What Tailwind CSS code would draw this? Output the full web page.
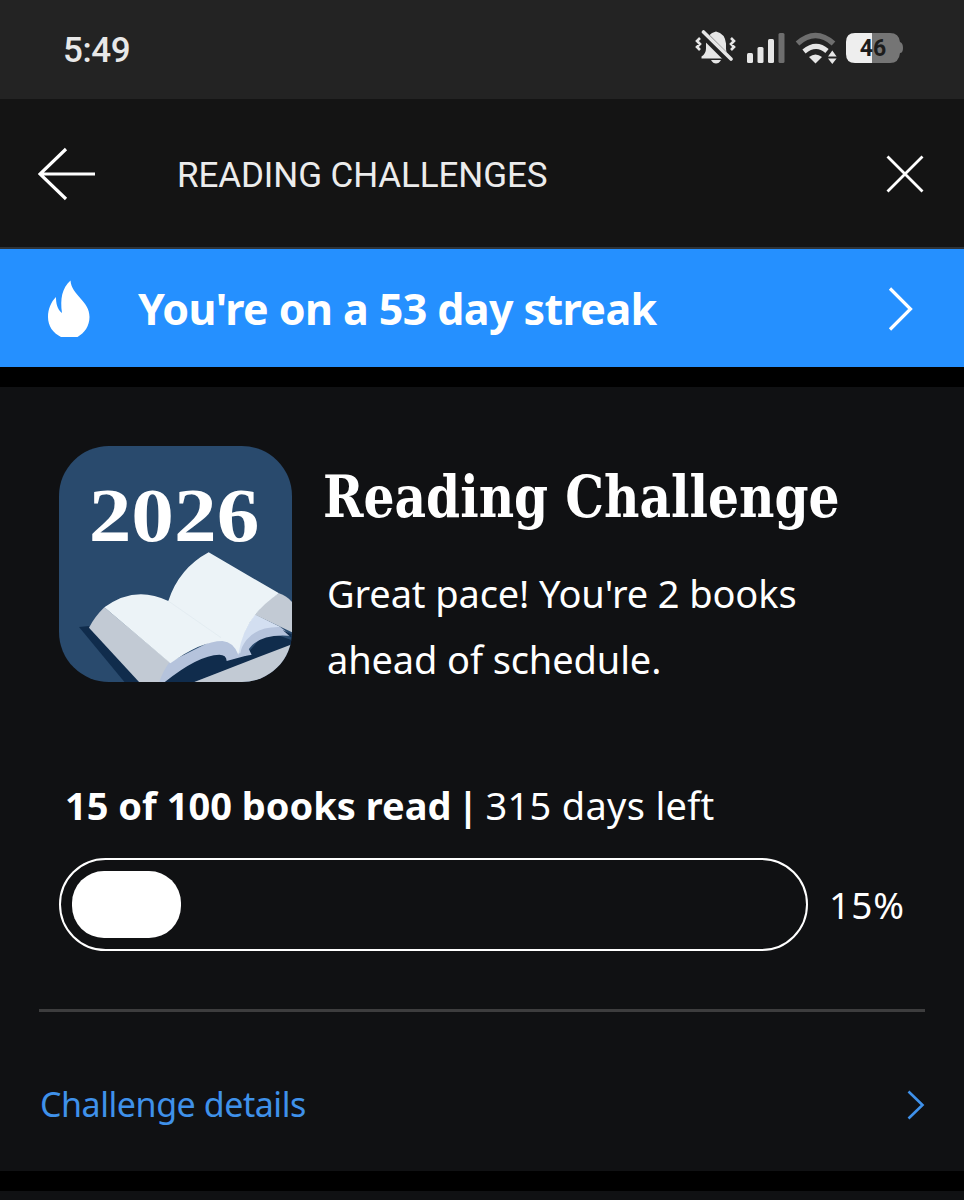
<!DOCTYPE html>
<html lang="en">
<head>
    <meta charset="UTF-8">
    <meta name="viewport" content="width=device-width, initial-scale=1.0">
    <title>Reading Challenges</title>
    <script src="https://cdn.jsdelivr.net/npm/@tailwindcss/browser@4"></script>
</head>
<body class="bg-black text-white font-['Noto_Sans',sans-serif] w-[964px] h-[1200px] overflow-hidden">
    <!-- Status bar -->
    <div class="flex items-center justify-between h-[99px] bg-[#232323] pl-[63px] pr-[60px] font-[Roboto,sans-serif]">
        <span class="mt-[2px] text-[35px] leading-none font-medium tracking-[-0.4px] text-[#e8e8e8]">5:49</span>
        <svg class="w-[210px] h-[40px]" viewBox="694 30 210 40" fill="none">
            <!-- muted bell -->
            <g fill="#e6e6e6">
                <path d="M701.500 58.500v-2q4.500-3 4.500-8v-5q1-10 10-12 9 2 10 12v5q0 5 4 8v2z"/>
                <path d="M711 60h10q-2 3.500-5 3.500t-5-3.500z"/>
            </g>
            <path d="M702 33l30 30" stroke="#232323" stroke-width="8"/>
            <path d="M703.500 32l27.500 27" stroke="#e6e6e6" stroke-width="3.600" stroke-linecap="round"/>
            <path d="M700 38l-3 3 3 3-3 3 3 3M731 38l3 3-3 3 3 3-3 3" stroke="#e6e6e6" stroke-width="2.600"/>
            <!-- signal -->
            <g fill="#e6e6e6">
                <rect x="747" y="53" width="6" height="10" rx="1.500"/>
                <rect x="757.500" y="47" width="6" height="16" rx="1.500"/>
                <rect x="768" y="39" width="6" height="24" rx="1.500"/>
                <rect x="778.500" y="33" width="6" height="30" rx="1.500" fill="#6e6e6e"/>
            </g>
            <!-- wifi -->
            <path d="M797.500 43.500q18-16 36 0" stroke="#6e6e6e" stroke-width="5.500"/>
            <path d="M804 51.500q12-10 23-.5" stroke="#e6e6e6" stroke-width="5"/>
            <path d="M809 57q6.500-5 13 0l-6.500 6.500z" fill="#e6e6e6"/>
            <path d="M828 56.500l4.300-6 4.300 6zM828 58.500h8.600l-4.300 5.500z" fill="#e6e6e6"/>
            <!-- battery -->
            <path d="M872 33h18q9 0 10 9 3 1 3 6t-3 5q-1 10-10 10h-18z" fill="#757575"/>
            <path d="M872 33h-17q-9 0-9 9v12q0 9 9 9h17z" fill="#eeeeee"/>
            <text x="873" y="56" text-anchor="middle" font-family="Roboto" font-weight="700" font-size="23" fill="#1c1c1c">46</text>
        </svg>
    </div>

    <!-- App header -->
    <header class="flex items-center h-[150px] bg-[#141414] border-b-2 border-[#2e3338] pt-[2px] pl-[38px] pr-[40px]">
        <svg class="w-[58px] h-[54px]" viewBox="0 0 58 54" fill="none" stroke="#fff" stroke-width="3.200">
            <path d="M28 2L2 27l26 25M2 27h55"/>
        </svg>
        <h1 class="mt-[2px] ml-[81px] text-[35px] leading-none tracking-[-0.1px] font-[Roboto,sans-serif] text-[#ececec]">READING CHALLENGES</h1>
        <svg class="ml-auto w-[38px] h-[38px]" viewBox="0 0 38 38" fill="none" stroke="#fff" stroke-width="2.800">
            <path d="M1.500 1.500l35 35M36.500 1.500l-35 35"/>
        </svg>
    </header>

    <!-- Streak banner -->
    <a class="flex items-center h-[118px] bg-[#2590ff] pl-[48px] pr-[51px]">
        <svg class="mt-[2px] w-[42px] h-[58px]" viewBox="0 0 42 58" fill="#fff">
            <path d="M22.500.5c1 15 19 20 19 36.500 0 9-5 16-12 20H13C5 53 0 46 0 37c0-8 3-15 8-20 0 6 1 12 6 16C12 19 14 8 22.500.5z"/>
        </svg>
        <span class="ml-[48px] text-[43px] leading-none font-bold tracking-[-0.6px]">You're on a 53 day streak</span>
        <svg class="ml-auto mt-[2px] w-[25px] h-[44px]" viewBox="0 0 25 44" fill="none" stroke="#fff" stroke-width="3.200">
            <path d="M2 1.500l20.500 20.500L2 42.500"/>
        </svg>
    </a>

    <!-- Challenge card -->
    <main class="mt-5 h-[784px] bg-[#101113] px-[39px] pt-[59px]">
        <div class="flex pl-[20px]">
            <svg class="w-[233px] h-[236px] rounded-[50px]" viewBox="27 28 699 708">
                <rect x="27" y="28" width="700" height="709" fill="#294a6d"/>
                <text x="116" y="314" textLength="512" lengthAdjust="spacingAndGlyphs" font-family="Liberation Serif" font-weight="700" font-size="229" fill="#fff">2026</text>
                <!-- cover -->
                <path d="M87 571l30-3 160 170h-52z" fill="#102c4c"/>
                <path d="M340 738l60-85 100-10 90 10 60-70 77 28v14L428 738z" fill="#102c4c"/>
                <path d="M428 738L727 622v116z" fill="#c2cad4"/>
                <!-- page edges -->
                <path d="M117 573q18-34 46-61l200 168-34 58h-60z" fill="#c2cad4"/>
                <path d="M327 738q12-36 32-62l140-70 76-10 30 58-20 4-55 15q-1-19-22-19-65 2-166 84z" fill="#b5c3dc"/>
                <path d="M565 655q0-50 50-120l75 35 36 28q-96-9-130 40l-10 20z" fill="#b5c3dc"/>
                <path d="M565 650q5-58 50-117l75 38q-66-2-100 38-16 20-19 41z" fill="#d3dff1"/>
                <path d="M687 470q-40 20-72 64l112 53v-90q-16-19-40-27z" fill="#c2cad4"/>
                <path d="M698 580l29 14v12z" fill="#102c4c"/>
                <!-- pages -->
                <path d="M163 512q92-68 192-19 32-98 121-146l211 123q-106 70-122 184-14-38-48-41-62 0-156 67z" fill="#ecf3f7"/>
                <path d="M355 493l158 110" stroke="#e0e9ee" stroke-width="2" fill="none"/>
            </svg>
            <div class="ml-[31px]">
                <h2 class="mt-[12px] h-[78px] text-[58px] leading-[78px] font-bold font-['DejaVu_Serif_Condensed','DejaVu_Serif',serif] font-stretch-condensed origin-left scale-x-[0.934] whitespace-nowrap">Reading Challenge</h2>
                <p class="mt-[24px] ml-[4px] text-[38px] leading-[66px] tracking-[-0.12px] whitespace-nowrap">Great pace! You're 2 books<br>ahead of schedule.</p>
            </div>
        </div>

        <p class="flex mt-[83px] ml-[26px] text-[38px] leading-[60px] whitespace-nowrap">
            <b>15 of 100 books read</b>
            <b class="ml-[6px]">|</b>
            <span class="ml-[7px] tracking-[0.3px]">315 days left</span>
        </p>

        <div class="flex items-center pl-[20px] mt-[23px]">
            <div class="w-[749px] h-[93px] rounded-full border-2 border-white p-[11px]">
                <div class="w-[109px] h-[67px] rounded-[32px] bg-white"></div>
            </div>
            <span class="ml-[21px] text-[37px] leading-none tracking-[1px]">15%</span>
        </div>

        <hr class="mt-[58px] border-t-[3px] border-[#3d3d3e]">

        <a class="flex items-center justify-between mt-[63px] h-[60px] text-[#3f91ea]">
            <span class="ml-[1px] mt-[-2px] text-[34px] leading-none tracking-[-0.45px]">Challenge details</span>
            <svg class="w-[18px] h-[30px]" viewBox="0 0 18 30" fill="none" stroke="currentColor" stroke-width="2.600">
                <path d="M1.500 1.500L15.500 15l-14 13.500"/>
            </svg>
        </a>
    </main>
    <div class="mt-5 h-[9px] bg-[#101113]"></div>
</body>
</html>
